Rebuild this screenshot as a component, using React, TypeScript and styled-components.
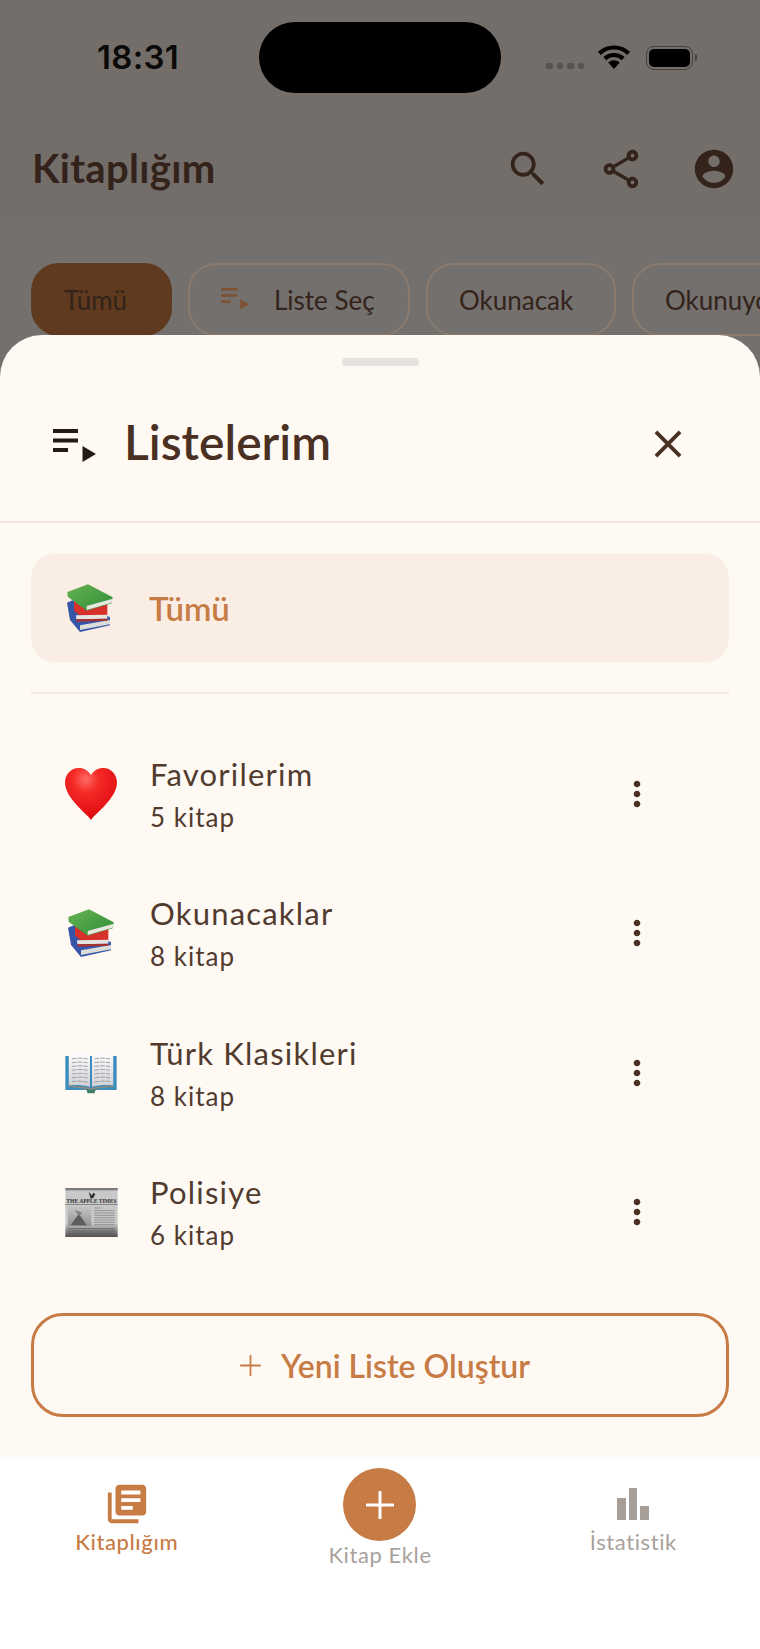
import styled, { createGlobalStyle } from 'styled-components';

const GlobalStyle = createGlobalStyle`
  html, body {
    margin: 0;
    padding: 0;
    background: #fff;
  }
  * {
    box-sizing: border-box;
  }
`;

const FONT = `Lato, 'Noto Sans', sans-serif`;
const ACCENT = '#c77b45';
const DARK = '#4a3023';

const Screen = styled.div`
  width: 760px;
  height: 1649px;
  display: flex;
  flex-direction: column;
  overflow: hidden;
  font-family: ${FONT};
`;

const Backdrop = styled.div`
  position: relative;
  flex: 1;
  background: #73706e;
  overflow: hidden;
`;

const TopArea = styled.header`
  height: 222px;
  background: #736e69;
`;

const StatusBar = styled.div`
  height: 116px;
  display: flex;
  align-items: flex-start;
  padding: 22px 0 0 97px;
`;

const Time = styled.div`
  width: 162px;
  height: 71px;
  line-height: 70px;
  font-family: Inter, sans-serif;
  font-size: 33px;
  font-weight: 600;
  letter-spacing: 0.3px;
  color: #0b0a09;
`;

const Island = styled.div`
  width: 242px;
  height: 71px;
  border-radius: 36px;
  background: #000;
`;

const StatusIcons = styled.div`
  display: flex;
  align-items: center;
  height: 71px;
  margin-left: 45px;
`;

const SignalDots = styled.div`
  display: flex;
  gap: 4px;
  margin: 17px 14px 0 0;
`;

const SignalDot = styled.span`
  width: 6.5px;
  height: 6.5px;
  border-radius: 2px;
  background: #57534f;
`;

const Battery = styled.div`
  position: relative;
  width: 47px;
  height: 24px;
  margin-left: 16px;
  padding: 2px;
  border: 1.5px solid #44413e;
  border-radius: 8px;

  &::after {
    content: '';
    position: absolute;
    right: -5px;
    top: 7px;
    width: 2px;
    height: 7px;
    border-radius: 0 2px 2px 0;
    background: #44413e;
  }
`;

const BatteryFill = styled.div`
  height: 100%;
  border-radius: 5px;
  background: #000;
`;

const AppBar = styled.div`
  height: 106px;
  display: flex;
  align-items: center;
  padding: 0 23px 0 32px;
`;

const AppTitle = styled.h1`
  flex: 1;
  margin: 0 0 3px;
  font-size: 40px;
  font-weight: 700;
  letter-spacing: 0.3px;
  color: #33231a;
`;

const BarActions = styled.div`
  display: flex;
  gap: 47px;
`;

const ChipRow = styled.div`
  display: flex;
  gap: 16px;
  padding: 41px 0 0 31px;
  white-space: nowrap;
`;

const Chip = styled.div<{ $active?: boolean; $width: number }>`
  flex: none;
  width: ${(p) => p.$width}px;
  height: 73px;
  display: flex;
  align-items: center;
  gap: 25px;
  padding-left: 31px;
  border-radius: 28px;
  border: 2px solid ${(p) => (p.$active ? '#5f3a1e' : '#8a7b6e')};
  background: ${(p) => (p.$active ? '#5f3a1e' : 'transparent')};
  font-size: 26px;
  color: #33231a;
`;

const Sheet = styled.section`
  position: absolute;
  left: 0;
  right: 0;
  top: 335px;
  bottom: 0;
  display: flex;
  flex-direction: column;
  background: #fff9f3;
  border-radius: 42px 42px 0 0;
`;

const Handle = styled.div`
  align-self: center;
  width: 77px;
  height: 8px;
  margin-top: 23px;
  border-radius: 4px;
  background: #e5e2df;
`;

const SheetHeader = styled.div`
  height: 157px;
  flex: none;
  display: flex;
  align-items: center;
  gap: 28px;
  padding: 0 69px 0 53px;
  border-bottom: 2px solid #f6e6dc;

  & > svg:first-child {
    margin-top: 5px;
  }
`;

const SheetTitle = styled.h2`
  flex: 1;
  margin: 0 0 4px;
  font-size: 48px;
  font-weight: 600;
  color: ${DARK};
`;

const SheetBody = styled.div`
  display: flex;
  flex-direction: column;
  padding: 31px 31px 0;
`;

const AllCard = styled.div`
  height: 108px;
  display: flex;
  align-items: center;
  gap: 35px;
  padding-left: 35px;
  border-radius: 24px;
  background: #f9ede4;
`;

const AllLabel = styled.span`
  font-size: 33px;
  font-weight: 600;
  color: ${ACCENT};
`;

const Divider = styled.div`
  height: 2px;
  margin: 30px 0;
  background: #f6e6dc;
`;

const ListRow = styled.div`
  height: 139.5px;
  display: flex;
  align-items: center;
  padding-left: 33px;
`;

const RowEmoji = styled.div`
  width: 54px;
  height: 52px;
  flex: none;
  display: flex;
  align-items: center;
  justify-content: center;
`;

const RowText = styled.div`
  flex: 1;
  margin-left: 32px;
  display: flex;
  flex-direction: column;
  gap: 8px;
  color: #513b2f;
`;

const RowName = styled.div`
  font-size: 31px;
  line-height: 38px;
  letter-spacing: 1.2px;
`;

const RowCount = styled.div`
  font-size: 26px;
  line-height: 32px;
  letter-spacing: 1px;
`;

const MoreButton = styled.div`
  width: 40px;
  height: 40px;
  margin-right: 72px;
`;

const NewListButton = styled.div`
  height: 104px;
  margin-top: 31px;
  display: flex;
  align-items: center;
  justify-content: center;
  gap: 20px;
  padding-left: 10px;
  border: 3px solid ${ACCENT};
  border-radius: 32px;
  font-size: 32px;
  font-weight: 600;
  color: ${ACCENT};
`;

const BottomNav = styled.nav`
  height: 192px;
  flex: none;
  display: grid;
  grid-template-columns: repeat(3, 1fr);
  background: #fff;
`;

const NavItem = styled.div<{ $raised?: boolean }>`
  display: flex;
  flex-direction: column;
  align-items: center;
  padding-top: ${(p) => (p.$raised ? 11 : 24)}px;
`;

const NavIcon = styled.div`
  height: 46px;
  display: flex;
  align-items: center;
  justify-content: center;
`;

const Fab = styled.div`
  width: 73px;
  height: 73px;
  border-radius: 50%;
  display: flex;
  align-items: center;
  justify-content: center;
  background: ${ACCENT};
`;

const NavLabel = styled.div<{ $active?: boolean; $raised?: boolean }>`
  margin-top: ${(p) => (p.$raised ? -1 : 0)}px;
  font-size: 22px;
  line-height: 30px;
  letter-spacing: 0.6px;
  font-weight: ${(p) => (p.$active ? 500 : 400)};
  color: ${(p) => (p.$active ? ACCENT : '#aaa19c')};
`;

const MaterialIcon = ({ d, size, color }: { d: string; size: number; color: string }) => (
  <svg width={size} height={size} viewBox="0 0 24 24" fill={color} style={{ flex: 'none' }}>
    <path d={d} />
  </svg>
);

const PlaylistIcon = ({ width, color }: { width: number; color: string }) => (
  <svg width={width} height={(width * 34) / 43} viewBox="0 0 43 34" fill={color} style={{ flex: 'none' }}>
    <rect x="0" y="0" width="25" height="4" />
    <rect x="0" y="9.5" width="25" height="4" />
    <rect x="0" y="19" width="15" height="4" />
    <path d="M29.5 17 43 25 29.5 33z" />
  </svg>
);

const PlusIcon = ({ size, color, weight }: { size: number; color: string; weight: number }) => (
  <svg width={size} height={size} viewBox="0 0 28 28" style={{ flex: 'none' }}>
    <path d="M14 1v26M1 14h26" stroke={color} strokeWidth={weight} strokeLinecap="round" />
  </svg>
);

const BarsIcon = () => (
  <svg width="32" height="32" viewBox="0 0 32 32" fill="#a89e98" style={{ flex: 'none' }}>
    <rect x="0" y="10" width="9" height="22" />
    <rect x="12" y="0" width="8" height="32" />
    <rect x="23" y="18" width="9" height="14" />
  </svg>
);

const WifiIcon = () => (
  <svg width="32" height="25" viewBox="0 0 32 25" fill="none" stroke="#000" strokeWidth="4.2" style={{ marginTop: -3 }}>
    <path d="M1.4 9.4A21 21 0 0 1 30.6 9.4" />
    <path d="M6.8 14.6A13.5 13.5 0 0 1 25.2 14.6" />
    <path d="M16 25 10.2 18.6A8.2 8.2 0 0 1 21.8 18.6Z" fill="#000" stroke="none" />
  </svg>
);

const HeartEmoji = () => (
  <svg width="54" height="54" viewBox="0 0 52 52">
    <defs>
      <radialGradient id="heartFill" cx="0.4" cy="0.22" r="0.85">
        <stop offset="0" stopColor="#ff6a63" />
        <stop offset="0.3" stopColor="#f42a27" />
        <stop offset="0.8" stopColor="#e30f12" />
        <stop offset="1" stopColor="#bb0a0e" />
      </radialGradient>
    </defs>
    <path
      d="M26 51C21 44 1 30 1 15 1 7 7 1 14 1c5.500 0 9.500 2.500 12 7 2.500-4.500 6.500-7 12-7 7 0 13 6 13 14 0 15-20 29-25 36z"
      fill="url(#heartFill)"
    />
  </svg>
);

const BooksEmoji = ({ size }: { size: number }) => (
  <svg width={size} height={size} viewBox="0 0 140 144">
    <defs>
      <linearGradient id="greenCover" x1="0" y1="0" x2="1" y2="1">
        <stop offset="0" stopColor="#66b352" />
        <stop offset="1" stopColor="#2f8c37" />
      </linearGradient>
    </defs>
    <path d="M1 56 20 48 130 100v24L40 144 10 108z" fill="#3556a8" />
    <path d="M40 124 130 108v13L40 138z" fill="#dcdcd8" />
    <path d="M22 50 122 56v38H38L22 80z" fill="#d8302a" />
    <path d="M28 94 122 92v12l-93 2z" fill="#e6e4e0" />
    <path d="M29 106 122 104v6l-92 3z" fill="#a93030" />
    <path d="M2 24 64 1 138 40 135 58 60 80 3 38z" fill="url(#greenCover)" />
    <path d="M60 66 138 44 135 56 60 78z" fill="#e7e6df" />
  </svg>
);

const OpenBookEmoji = () => (
  <svg width="52" height="42" viewBox="0 0 152 120">
    <defs>
      <linearGradient id="pageFill" x1="0" y1="0" x2="0" y2="1">
        <stop offset="0" stopColor="#fdfdfd" />
        <stop offset="1" stopColor="#cfcfd3" />
      </linearGradient>
    </defs>
    <rect x="1" y="10" width="150" height="100" rx="2" fill="#3a8dbd" />
    <path d="M62 108h28l-4 11H66z" fill="#3f7f62" />
    <path d="M10 100 74 108 142 100v-4L76 103 10 96z" fill="#8d8a80" />
    <path d="M11 9C32 3 56 2 73 8V100C54 95 32 94 11 96z" fill="url(#pageFill)" />
    <path d="M79 8C96 2 120 3 141 9V96C120 94 98 95 79 100z" fill="url(#pageFill)" />
    <g stroke="#8f9399" strokeWidth="2.500" strokeDasharray="14 3">
      <path d="M20 19Q44 14 66 19M20 30Q44 26 66 30M20 41Q44 37 66 41M20 52Q44 48 66 52M20 63Q44 59 66 63M20 74Q44 70 66 74M20 85Q44 82 66 87" fill="none" />
      <path d="M86 19Q108 14 132 19M86 30Q108 26 132 30M86 41Q108 37 132 41M86 52Q108 48 132 52M86 63Q108 59 132 63M86 74Q108 70 132 74M86 87Q108 82 132 85" fill="none" />
    </g>
  </svg>
);

const NewspaperEmoji = () => (
  <svg width="53" height="49" viewBox="0 0 157 147">
    <defs>
      <linearGradient id="paperFill" x1="0" y1="0" x2="0" y2="1">
        <stop offset="0" stopColor="#c9c9c9" />
        <stop offset="0.72" stopColor="#c8c8c8" />
        <stop offset="1" stopColor="#4f4f4f" />
      </linearGradient>
      <linearGradient id="photoFill" x1="0" y1="0" x2="0" y2="1">
        <stop offset="0" stopColor="#c4c4c4" />
        <stop offset="1" stopColor="#939393" />
      </linearGradient>
    </defs>
    <rect x="0" y="0" width="157" height="147" fill="url(#paperFill)" />
    <rect x="0" y="0" width="157" height="7" fill="#7b7b7b" />
    <path d="M70 12 80 22 84 14 90 18 84 30 76 32z" fill="#333" />
    <text x="3" y="44" textLength="151" lengthAdjust="spacingAndGlyphs" fontFamily="'Liberation Serif', serif" fontSize="17" fontWeight="700" fill="#333">
      THE APPLE TIMES
    </text>
    <rect x="0" y="49" width="157" height="2" fill="#666" />
    <rect x="8" y="56" width="70" height="58" fill="url(#photoFill)" />
    <path d="M16 112 40 78 50 90 64 112z" fill="#5d5d5d" />
    <path d="M28 66 50 74 42 84z" fill="#7a7a7a" />
    <g stroke="#8a8a8a" strokeWidth="2.500">
      <path d="M86 60h22M86 68h62M86 75h62M86 82h62M86 89h62M86 96h62M86 103h62M86 110h62" />
    </g>
    <g stroke="#555" strokeWidth="2">
      <path d="M8 122h140M8 129h140M8 136h140" />
    </g>
  </svg>
);

const icons = {
  search:
    'M15.5 14h-.79l-.28-.27C15.41 12.59 16 11.11 16 9.5 16 5.91 13.09 3 9.5 3S3 5.91 3 9.5 5.91 16 9.5 16c1.61 0 3.09-.59 4.23-1.57l.27.28v.79l5 4.99L20.49 19l-4.99-5zm-6 0C7.01 14 5 11.99 5 9.5S7.01 5 9.5 5 14 7.01 14 9.5 11.99 14 9.5 14z',
  share:
    'M18 16.08c-.76 0-1.44.3-1.96.77L8.91 12.7c.05-.23.09-.46.09-.7s-.04-.47-.09-.7l7.05-4.11c.54.5 1.25.81 2.04.81 1.66 0 3-1.34 3-3s-1.34-3-3-3-3 1.34-3 3c0 .24.04.47.09.7L8.04 9.81C7.5 9.31 6.79 9 6 9c-1.66 0-3 1.34-3 3s1.34 3 3 3c.79 0 1.5-.31 2.04-.81l7.12 4.16c-.05.21-.08.43-.08.65 0 1.61 1.31 2.92 2.92 2.92s2.92-1.31 2.92-2.92-1.31-2.92-2.92-2.92zM18 4c.55 0 1 .45 1 1s-.45 1-1 1-1-.45-1-1 .45-1 1-1zM6 13c-.55 0-1-.45-1-1s.45-1 1-1 1 .45 1 1-.45 1-1 1zm12 7.020c-.55 0-1-.45-1-1s.45-1 1-1 1 .45 1 1-.45 1-1 1z',
  account:
    'M12 2C6.48 2 2 6.48 2 12s4.48 10 10 10 10-4.48 10-10S17.52 2 12 2zm0 3c1.66 0 3 1.34 3 3s-1.34 3-3 3-3-1.34-3-3 1.34-3 3-3zm0 14.200c-2.500 0-4.710-1.280-6-3.220.03-1.990 4-3.080 6-3.080 1.990 0 5.970 1.090 6 3.080-1.290 1.940-3.500 3.220-6 3.220z',
  close:
    'M19 6.410L17.590 5 12 10.590 6.410 5 5 6.410 10.590 12 5 17.590 6.410 19 12 13.410 17.590 19 19 17.590 13.410 12z',
  more:
    'M12 8c1.100 0 2-.9 2-2s-.9-2-2-2-2 .9-2 2 .9 2 2 2zm0 2c-1.100 0-2 .9-2 2s.9 2 2 2 2-.9 2-2-.9-2-2-2zm0 6c-1.100 0-2 .9-2 2s.9 2 2 2 2-.9 2-2-.9-2-2-2z',
  library:
    'M4 6H2v14c0 1.100.9 2 2 2h14v-2H4V6zm16-4H8c-1.100 0-2 .9-2 2v12c0 1.100.9 2 2 2h12c1.100 0 2-.9 2-2V4c0-1.100-.9-2-2-2zm-1 9H9V9h10v2zm-4 4H9v-2h6v2zm4-8H9V5h10v2z',
};

const lists = [
  { name: 'Favorilerim', count: '5 kitap', emoji: <HeartEmoji /> },
  { name: 'Okunacaklar', count: '8 kitap', emoji: <BooksEmoji size={48} /> },
  { name: 'Türk Klasikleri', count: '8 kitap', emoji: <OpenBookEmoji /> },
  { name: 'Polisiye', count: '6 kitap', emoji: <NewspaperEmoji /> },
];

export default function App() {
  return (
    <Screen>
      <GlobalStyle />
      <Backdrop>
        <TopArea>
          <StatusBar>
            <Time>18:31</Time>
            <Island />
            <StatusIcons>
              <SignalDots>
                <SignalDot />
                <SignalDot />
                <SignalDot />
                <SignalDot />
              </SignalDots>
              <WifiIcon />
              <Battery>
                <BatteryFill />
              </Battery>
            </StatusIcons>
          </StatusBar>
          <AppBar>
            <AppTitle>Kitaplığım</AppTitle>
            <BarActions>
              <MaterialIcon d={icons.search} size={46} color="#33231a" />
              <MaterialIcon d={icons.share} size={46} color="#33231a" />
              <MaterialIcon d={icons.account} size={46} color="#33231a" />
            </BarActions>
          </AppBar>
        </TopArea>
        <ChipRow>
          <Chip $active $width={141}>Tümü</Chip>
          <Chip $width={222}>
            <PlaylistIcon width={28} color="#7d5132" />
            Liste Seç
          </Chip>
          <Chip $width={190}>Okunacak</Chip>
          <Chip $width={180}>Okunuyor</Chip>
        </ChipRow>

        <Sheet>
          <Handle />
          <SheetHeader>
            <PlaylistIcon width={43} color="#231a15" />
            <SheetTitle>Listelerim</SheetTitle>
            <MaterialIcon d={icons.close} size={46} color={DARK} />
          </SheetHeader>
          <SheetBody>
            <AllCard>
              <BooksEmoji size={48} />
              <AllLabel>Tümü</AllLabel>
            </AllCard>
            <Divider />
            {lists.map((list) => (
              <ListRow key={list.name}>
                <RowEmoji>{list.emoji}</RowEmoji>
                <RowText>
                  <RowName>{list.name}</RowName>
                  <RowCount>{list.count}</RowCount>
                </RowText>
                <MoreButton>
                  <MaterialIcon d={icons.more} size={40} color={DARK} />
                </MoreButton>
              </ListRow>
            ))}
            <NewListButton>
              <PlusIcon size={21} color={ACCENT} weight={2.4} />
              Yeni Liste Oluştur
            </NewListButton>
          </SheetBody>
        </Sheet>
      </Backdrop>

      <BottomNav>
        <NavItem>
          <NavIcon>
            <MaterialIcon d={icons.library} size={46} color={ACCENT} />
          </NavIcon>
          <NavLabel $active>Kitaplığım</NavLabel>
        </NavItem>
        <NavItem $raised>
          <Fab>
            <PlusIcon size={28} color="#fff" weight={3} />
          </Fab>
          <NavLabel $raised>Kitap Ekle</NavLabel>
        </NavItem>
        <NavItem>
          <NavIcon>
            <BarsIcon />
          </NavIcon>
          <NavLabel>İstatistik</NavLabel>
        </NavItem>
      </BottomNav>
    </Screen>
  );
}
